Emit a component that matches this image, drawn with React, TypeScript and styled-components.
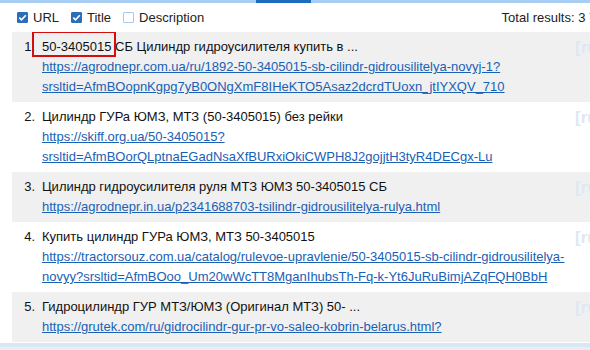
import React from 'react';
import styled, { createGlobalStyle } from 'styled-components';

type Result = {
  title: string
  mark?: string
  url: string
  lang: string
}

const results: Result[] = [
  {
    mark: '50-3405015',
    title: ' СБ Цилиндр гидроусилителя купить в ...',
    url: 'https://agrodnepr.com.ua/ru/1892-50-3405015-sb-cilindr-gidrousilitelya-novyj-1?srsltid=AfmBOopnKgpg7yB0ONgXmF8IHeKTO5Asaz2dcrdTUoxn_jtIYXQV_710',
    lang: '[ru]',
  },
  {
    title: 'Цилиндр ГУРа ЮМЗ, МТЗ (50-3405015) без рейки',
    url: 'https://skiff.org.ua/50-3405015?srsltid=AfmBOorQLptnaEGadNsaXfBURxiOkiCWPH8J2gojjtH3tyR4DECgx-Lu',
    lang: '[ru]',
  },
  {
    title: 'Цилиндр гидроусилителя руля МТЗ ЮМЗ 50-3405015 СБ',
    url: 'https://agrodnepr.in.ua/p2341688703-tsilindr-gidrousilitelya-rulya.html',
    lang: '[ru]',
  },
  {
    title: 'Купить цилиндр ГУРа ЮМЗ, МТЗ 50-3405015',
    url: 'https://tractorsouz.com.ua/catalog/rulevoe-upravlenie/50-3405015-sb-cilindr-gidrousilitelya-novyy?srsltid=AfmBOoo_Um20wWcTT8MganIhubsTh-Fq-k-Yt6JuRuBimjAZqFQH0BbH',
    lang: '[ru]',
  },
  {
    title: 'Гидроцилиндр ГУР МТЗ/ЮМЗ (Оригинал МТЗ) 50- ...',
    url: 'https://grutek.com/ru/gidrocilindr-gur-pr-vo-saleo-kobrin-belarus.html?',
    lang: '[ru]',
  },
]

const GlobalStyle = createGlobalStyle`
  html, body {
    margin: 0;
    padding: 0;
    overflow: hidden;
    background: #fff;
  }
  body {
    font-family: "Liberation Sans", Arial, sans-serif;
    font-size: 13px;
    color: #111;
  }
`

const Page = styled.div`
  width: 650px;
  height: 350px;
  display: flex;
  flex-direction: column;
`

const ScrollTrack = styled.div`
  height: 3px;
  background: #a7cdf3;
  display: flex;
  flex-shrink: 0;
`

const ScrollThumb = styled.div<{ $offset: number; $size: number }>`
  margin-left: ${p => p.$offset}px;
  width: ${p => p.$size}px;
  background: #1b6cbf;
`

const Header = styled.div`
  height: 29px;
  display: flex;
  align-items: center;
  padding: 0 14px 0 17px;
  flex-shrink: 0;
`

const Option = styled.label`
  display: flex;
  align-items: center;
  gap: 5px;
  margin-right: 12px;
  color: #222;
  font-size: 13px;
`

const Box = styled.span<{ $checked: boolean }>`
  width: 11px;
  height: 11px;
  box-sizing: border-box;
  border-radius: 1px;
  display: flex;
  align-items: center;
  justify-content: center;
  background: ${p => (p.$checked ? '#2c6db8' : '#fff')};
  border: 1px solid ${p => (p.$checked ? '#2c6db8' : '#a9c8ee')};
`

const Total = styled.div`
  margin-left: auto;
  color: #222;
  white-space: nowrap;
`

const List = styled.ol`
  list-style: none;
  margin: 0 0 0 12px;
  padding: 0;
  height: 311px;
  overflow: hidden;
  flex-shrink: 0;
`

const Row = styled.li<{ $shaded: boolean }>`
  display: grid;
  grid-template-columns: 30px 533px 1fr;
  padding: 5px 0;
  line-height: 20px;
  background: ${p => (p.$shaded ? '#f0f0f0' : '#fff')};
`

const Num = styled.span`
  text-align: right;
  padding-right: 7px;
`

const Body = styled.div`
  display: flex;
  flex-direction: column;
  min-width: 0;
`

const Title = styled.div`
  color: #111;
`

const Mark = styled.span`
  position: relative;
  &::after {
    content: '';
    position: absolute;
    left: -10px;
    right: -5px;
    top: -8px;
    bottom: -3px;
    border: 2px solid #d70d0d;
  }
`

const Link = styled.a`
  color: #1a60b5;
  text-decoration: underline;
  overflow-wrap: break-word;
`

const Lang = styled.span`
  color: #dde8f3;
  font-weight: bold;
  font-size: 17px;
  line-height: 22px;
  white-space: nowrap;
`

const BottomTrack = styled.div`
  height: 4px;
  background: #d8e7f8;
  flex-shrink: 0;
`

const Footer = styled.div`
  flex: 1;
  background: #ededed;
`

const Check = () => (
  <svg width="9" height="9" viewBox="0 0 9 9">
    <path d="M1.3 4.6 L3.5 6.8 L7.8 2.2" fill="none" stroke="#fff" strokeWidth="1.6" />
  </svg>
)

const Toggle = (props: { label: string; checked: boolean }) => (
  <Option>
    <Box $checked={props.checked}>{props.checked && <Check />}</Box>
    {props.label}
  </Option>
)

const App = () => {
  return (
    <Page>
      <GlobalStyle />
      <ScrollTrack>
        <ScrollThumb $offset={256} $size={55} />
      </ScrollTrack>
      <Header>
        <Toggle label="URL" checked />
        <Toggle label="Title" checked />
        <Toggle label="Description" checked={false} />
        <Total>Total results: 3 770 000</Total>
      </Header>
      <List>
        {results.map((r, i) => (
          <Row key={i} $shaded={i % 2 === 0}>
            <Num>{i + 1}.</Num>
            <Body>
              <Title>
                {r.mark && <Mark>{r.mark}</Mark>}
                {r.title}
              </Title>
              <Link href={r.url}>{r.url}</Link>
            </Body>
            <Lang>{r.lang}</Lang>
          </Row>
        ))}
      </List>
      <BottomTrack />
      <Footer />
    </Page>
  );
};

export default App;
